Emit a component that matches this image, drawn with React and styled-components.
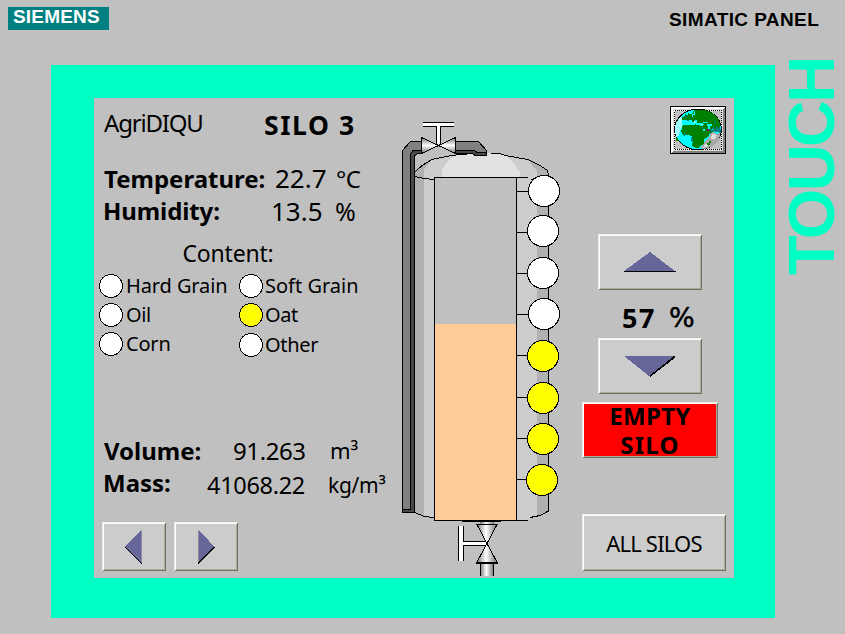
import React from "react";
import styled, { createGlobalStyle } from "styled-components";

const Global = createGlobalStyle`
  body { margin: 0; background: #c0c0c0; }
  * { box-sizing: border-box; }
`;

const Panel = styled.div`
  width: 845px;
  height: 634px;
  background: #c0c0c0;
  display: flex;
  flex-direction: column;
  overflow: hidden;
  color: #000;
  font-family: "Noto Sans", sans-serif;
`;

const Header = styled.header`
  height: 65px;
  flex: none;
  display: flex;
  justify-content: space-between;
  align-items: flex-start;
  padding: 7px 25px 0 8px;
  font: 700 19px/25px "Liberation Sans", sans-serif;
`;

const Brand = styled.div`
  width: 101px;
  height: 23px;
  background: #008080;
  color: #fff;
  line-height: 19px;
  padding-left: 5px;
  letter-spacing: 0.2px;
  white-space: nowrap;
`;

const Model = styled.div`
  letter-spacing: 0.4px;
  width: 151px;
  white-space: nowrap;
`;

const Main = styled.main`
  display: flex;
  flex: none;
  padding-left: 51px;
  height: 553px;
`;

const Frame = styled.div`
  width: 724px;
  height: 553px;
  flex: none;
  background: #00ffc4;
  padding: 33px 41px 40px 43px;
`;

const Side = styled.div`
  width: 70px;
  height: 553px;
  display: flex;
  justify-content: flex-end;
`;

const Touch = styled.div`
  writing-mode: vertical-rl;
  transform: rotate(180deg);
  font: 700 65px/75px "Liberation Sans", sans-serif;
  letter-spacing: -2.7px;
  color: #00ffc4;
  width: 75px;
  height: 219px;
  flex: none;
  margin: -9px -4px 0 0;
  white-space: nowrap;
`;

const Screen = styled.div`
  width: 640px;
  height: 480px;
  background: #c0c0c0;
  display: grid;
  grid-template-columns: 300px 176px 164px;
`;

const Readings = styled.section`
  padding: 9px 0 0 8px;
  display: flex;
  flex-direction: column;
`;

const Row = styled.div`
  display: flex;
  align-items: flex-start;
  height: 32px;
  line-height: 32px;
  margin-top: ${(p) => p.$gap || 0}px;
`;

const Text = styled.span`
  flex: none;
  display: block;
  white-space: nowrap;
  font-size: ${(p) => p.$size || 24}px;
  font-weight: ${(p) => (p.$bold ? 700 : 400)};
  letter-spacing: ${(p) => p.$track || 0}px;
  margin-left: ${(p) => p.$indent || 0}px;
  margin-top: ${(p) => p.$drop || 0}px;
  width: ${(p) => (p.$w ? p.$w + "px" : "auto")};
`;

const Contents = styled.div`
  display: grid;
  grid-template-columns: 140px 140px;
  grid-auto-rows: 29px;
  margin: 3px 0 0 -3px;
`;

const Option = styled.div`
  display: flex;
  align-items: flex-start;
  padding-top: ${(p) => p.$drop || 0}px;
  font-size: 20px;
  line-height: 24px;
  letter-spacing: ${(p) => p.$track || 0}px;
  white-space: nowrap;
  gap: 2px;
`;

const Lamp = styled.svg`
  width: 24px;
  height: 24px;
  flex: none;
  margin-top: 2px;
  shape-rendering: crispEdges;
`;

const Label = styled.span`
  padding-top: 2px;
`;

const Button = styled.button`
  appearance: none;
  flex: none;
  width: ${(p) => p.$w}px;
  height: ${(p) => p.$h}px;
  margin: 0;
  padding: 0;
  border: 0;
  background: ${(p) => (p.$danger ? "#ff0000" : "#cccccc")};
  box-shadow: inset 1px 1px #f1efe2, inset -1px -1px #716f64,
    inset 2px 2px #ffffff, inset -2px -2px #aca899;
  color: #000;
  font: ${(p) => (p.$danger ? "700 24px/29px" : "400 22px/28px")} "Noto Sans", sans-serif;
  letter-spacing: ${(p) => p.$track || 0}px;
  display: flex;
  flex-direction: column;
  align-items: center;
  justify-content: center;
`;

const Nav = styled.nav`
  display: flex;
  gap: 8px;
  margin-top: 23px;
`;

const Controls = styled.section`
  display: flex;
  flex-direction: column;
  padding: 8px 8px 0 12px;
`;

const Jog = styled.div`
  display: flex;
  flex-direction: column;
  margin: 80px 0 8px 16px;
`;

const Level = styled.div`
  display: flex;
  height: 48px;
  line-height: 52px;
  padding-left: 24px;
`;

const Percent = styled.span`
  font-family: "DejaVu Sans", sans-serif;
  font-size: 27px;
  margin-left: 13px;
  margin-top: 2px;
  -webkit-text-stroke: 0.5px #000;
`;

const Tight = styled.span`
  letter-spacing: ${(p) => p.$track}px;
`;

const GlobeButton = styled.button`
  appearance: none;
  align-self: flex-end;
  flex: none;
  width: 56px;
  height: 48px;
  border: 0;
  padding: 0;
  background: #c0c0c0;
`;

const Drawing = styled.svg`
  display: block;
  shape-rendering: crispEdges;
`;

const Spacer = styled.div`
  height: 56px;
  flex: none;
`;

function Globe() {
  return (
    <GlobeButton aria-label="Language">
      <Drawing width="56" height="48" viewBox="0 0 168 144">
        <rect width="168" height="144" fill="#000" />
        <path d="M3 3H165V141H3Z" fill="#808080" />
        <path d="M3 3H165L159 9H9V135L3 141Z" fill="#fff" />
        <path d="M9 9H159V135H9Z" fill="#d8d8d0" />
        <path d="M12 12H156V132H12Z" fill="#c0c0c0" />
        <rect x="13.5" y="13.5" width="141" height="117" fill="none" stroke="#fff" strokeWidth="3" />
        <rect x="13.5" y="13.5" width="141" height="117" fill="none" stroke="#000" strokeWidth="3" strokeDasharray="3 3" />
        <ellipse cx="84" cy="70" rx="70" ry="61" fill="#00ffff" stroke="#000" strokeWidth="3" />
        <path d="M17 52L30 34L38 32L37 58L25 90L18 94L15 72Z" fill="#a0ffff" />
        <path d="M112 14L138 30L151 54L152 80L132 78L118 54Z" fill="#008080" />
        <path d="M124 75L140 83L151 82L146 104L126 122L102 130L91 126L104 106L116 96Z" fill="#a8a8a8" />
        <path d="M128 82L140 88L134 100L122 98ZM104 116L114 112L112 122L99 125Z" fill="#e0e0e0" />
        <path d="M34 43L36 34L46 30L44 24L53 27L58 18L66 24L72 13L85 11L105 13L122 18L137 28L147 42L151 58L146 68L140 62L137 72L130 60L126 68L129 77L119 84L108 77L104 68L96 62L101 55L91 50L84 53L78 44L69 50L61 42L54 47L44 42Z" fill="#008000" />
        <path d="M36 60L48 56L60 58L74 54L88 58L98 60L104 72L116 80L118 88L109 95L101 101L101 113L91 121L86 126L76 125L66 119L68 109L63 101L65 91L56 86L43 89L36 82L34 75Z" fill="#008000" />
        <path d="M16 96H24V105H20ZM118 105H124V111H115ZM112 112H120V117H112Z" fill="#008000" />
        <path d="M58 18H64V24H58ZM72 15H76V28H69V32H65V23H72ZM43 49H60V46H48V43H65V47H76V43H82V52H76V57H70V52H60V55H39V49ZM90 50H100V57H87V55H90ZM100 48H114V51H100ZM112 55H127V60H121V70H115V61H112ZM99 69H106V76H99Z" fill="#00ffff" />
        <path d="M46 30H52V36H46ZM52 41H57V45H52ZM96 63H100V69H96ZM121 70H125V77H121ZM134 45H139V55H134ZM43 82H48V88H43ZM64 94H68V106H64Z" fill="#008080" />
        <path d="M111 69H117V76H111Z" fill="#800080" />
        <path d="M72 46H76V50H72ZM94 53H97V57H94Z" fill="#fff" />
      </Drawing>
    </GlobeButton>
  );
}

function Arrow({ w, h, points, shade, edge }) {
  return (
    <Drawing width={w} height={h} viewBox={`0 0 ${w} ${h}`}>
      {shade && <polygon points={shade} fill="#000" />}
      <polygon points={points} fill="#666699" />
      {edge && <path d={edge} stroke="#8c8ca0" fill="none" />}
    </Drawing>
  );
}

const lamps = [
  [544, 191, 191], [543, 231, 232], [543, 273, 273], [544, 314, 314],
  [543, 356, 355], [543, 398, 397], [543, 439, 438], [542, 480, 479],
];

function Silo() {
  return (
    <Drawing width="176" height="480" viewBox="394 98 176 480">
      <defs>
        <linearGradient id="cone" x1="0" y1="0" x2="0" y2="1">
          <stop offset="0" stopColor="#707070" />
          <stop offset="0.5" stopColor="#ffffff" />
          <stop offset="1" stopColor="#707070" />
        </linearGradient>
        <linearGradient id="tube" x1="0" y1="0" x2="1" y2="0">
          <stop offset="0" stopColor="#707070" />
          <stop offset="0.45" stopColor="#ffffff" />
          <stop offset="1" stopColor="#707070" />
        </linearGradient>
        <clipPath id="shell">
          <path d="M415 513V171L422 165L432 159L446 156L460 154L475 153H491L505 155L528 159L540 165L548 171V511L540 515L530 518V520H434V517L424 516Z" />
        </clipPath>
      </defs>

      <g clipPath="url(#shell)">
        <rect x="415" y="150" width="134" height="371" fill="#b0b0b0" />
        <path d="M424 521V170L431 160L450 150H510L527 159L537 171V521Z" fill="#cccccc" />
        <path d="M442 178V170L447 162L455 155L475 150H492L505 154L515 165L520 172V178Z" fill="#e2e2e2" />
      </g>
      <path d="M415.500 171.500L422 165.500L432 159.500L446 156.500L460 154.500L475 153.500M491 153.500H500L505 155.500L528 159.500L540 165.500L547.500 170.500L548.500 176V511L540 515.500L530 517.500" fill="none" stroke="#000" />
      <path d="M415 176.500L424 178.500L434 179.500M531 179.500L536 178.500M415 512.500L424 516.500L434 517.500" fill="none" stroke="#000" />

      <rect x="434" y="177" width="83" height="344" fill="#c0c0c0" />
      <rect x="435" y="324" width="81" height="196" fill="#ffcc99" />
      <path d="M434.500 177V521M516.500 177V521M434 177.500H528M434 520.500H528" stroke="#000" />

      <path d="M402.500 512.500V150.500L410.500 141.500H421.500V153.500H418L414.500 156V512.500Z" fill="#484848" stroke="#000" />
      <path d="M402.500 509.500V150.500L410.500 141.500H421.500V150.500H413L410.500 154V509.500Z" fill="#808080" stroke="#000" />
      <path d="M455.500 150.500H475L477 152.500H486.500V155.500H475.500L472 153.500H455.500Z" fill="#484848" stroke="#000" />
      <path d="M455.500 141.500H478.500L486.500 150.500V152.500H477L474.500 150.500H455.500Z" fill="#808080" stroke="#000" />

      <path d="M436 126H441V145H436Z" fill="#fff" />
      <path d="M436.500 126V144M440.500 126V144" stroke="#000" />
      <rect x="423" y="122" width="31" height="5" fill="#fff" />
      <path d="M423 122.500H454M423 126.500H437M440 126.500H454" stroke="#000" />
      <path d="M421.500 137.500L438.500 145.500L455.500 137.500V153.500L438.500 145.500L421.500 153.500Z" fill="url(#cone)" stroke="#000" />

      {lamps.map(([x, y, wire], i) => (
        <g key={i} stroke="#000">
          <path d={`M517 ${wire + 0.5}H530`} />
          <circle cx={x} cy={y} r="15.500" fill={i < 4 ? "#fff" : "#ffff00"} />
        </g>
      ))}

      <rect x="480" y="521" width="14" height="4" fill="url(#tube)" />
      <path d="M462 521.500H501" stroke="#000" />
      <path d="M458 526H464V561H458ZM464 541H486V546H464Z" fill="#fff" />
      <path d="M458.500 526V561M463.500 526V542M463.500 545V561M463 541.500H485M463 545.500H485" stroke="#000" />
      <path d="M477 524.500H497L487 543.500L497.500 563H476.500L487 543.500Z" fill="url(#tube)" stroke="#000" />
      <path d="M476 563H498" stroke="#000" strokeWidth="2" />
      <rect x="480" y="564" width="14" height="12" fill="url(#tube)" />
      <path d="M480.500 564V576M493.500 564V576" stroke="#000" />
    </Drawing>
  );
}

const options = [
  { name: "Hard Grain", track: -0.1, inset: 1 },
  { name: "Soft Grain" },
  { name: "Oil", track: -0.4, inset: 1 },
  { name: "Oat", on: true, track: -0.4 },
  { name: "Corn", track: -0.2, inset: 1 },
  { name: "Other", track: -0.3, drop: 1 },
];

const Inset = styled(Label)`
  padding-left: ${(p) => p.$inset || 0}px;
`;

export default function App() {
  return (
    <Panel>
      <Global />
      <Header>
        <Brand>SIEMENS</Brand>
        <Model>SIMATIC PANEL</Model>
      </Header>
      <Main>
        <Frame>
          <Screen>
            <Readings>
              <Row>
                <Text $w={160} $indent={2} $track={-1.2}>AgriDIQU</Text>
                <Text $size={26.5} $bold $track={1.6} $drop={2}>SILO 3</Text>
              </Row>
              <Row $gap={24}>
                <Text $w={171} $indent={2} $bold>Temperature:</Text>
                <Text $size={26} $w={61} $drop={-1}>22.7</Text>
                <Text $track={-0.4}>°C</Text>
              </Row>
              <Row>
                <Text $w={168} $indent={1} $bold $track={-0.1}>Humidity:</Text>
                <Text $size={26} $w={64}>13.5</Text>
                <Text $size={25}>%</Text>
              </Row>
              <Row $gap={10}>
                <Text $size={23} $indent={80.5} $track={-0.2}>Content:</Text>
              </Row>
              <Contents>
                {options.map((o) => (
                  <Option key={o.name} $track={o.track} $drop={o.drop}>
                    <Lamp viewBox="0 0 24 24">
                      <circle cx="12" cy="12" r="11.500" fill={o.on ? "#ffff00" : "#fff"} stroke="#000" />
                    </Lamp>
                    <Inset $inset={o.inset}>{o.name}</Inset>
                  </Option>
                ))}
              </Contents>
              <Row $gap={76}>
                <Text $w={129} $indent={2} $bold>Volume:</Text>
                <Text $w={97} $track={-0.4}>91.263</Text>
                <Text $size={22} $drop={-1}>m³</Text>
              </Row>
              <Row>
                <Text $w={104} $indent={1} $bold>Mass:</Text>
                <Text $size={23.5} $w={121} $drop={2} $track={-0.3}>41068.22</Text>
                <Text $size={21} $drop={2} $track={-0.3}>kg/m³</Text>
              </Row>
              <Nav>
                <Button $w={64} $h={49} aria-label="Previous">
                  <Arrow w={18} h={36} shade="0,18 17,1 17,36" points="0,17.500 17,0 17,34" edge="M16.500 1V33" />
                </Button>
                <Button $w={64} $h={49} aria-label="Next">
                  <Arrow w={18} h={36} shade="1,2 18,18 1,36" points="1,0 17,17.500 1,34" edge="M1.500 1V33" />
                </Button>
              </Nav>
            </Readings>
            <Silo />
            <Controls>
              <Globe />
              <Jog>
                <Button $w={104} $h={56} aria-label="Increase">
                  <Arrow w={52} h={20} shade="0,19 52,19 52,20 0,20" points="0,19 26,0 51,19" />
                </Button>
                <Level>
                  <Text $size={27} $bold $track={1.5} $drop={2}>57</Text>
                  <Percent>%</Percent>
                </Level>
                <Button $w={104} $h={56} aria-label="Decrease">
                  <Arrow w={52} h={21} shade="26,21 52,1 50,0 25,19" points="0,0 50,0 25,20" />
                </Button>
              </Jog>
              <Button $w={136} $h={56} $danger>
                <Tight $track={0.3}>EMPTY</Tight>
                <Tight $track={1.3}>SILO</Tight>
              </Button>
              <Spacer />
              <Button $w={144} $h={57} $track={-0.8}>ALL SILOS</Button>
            </Controls>
          </Screen>
        </Frame>
        <Side>
          <Touch>TOUCH</Touch>
        </Side>
      </Main>
    </Panel>
  );
}
